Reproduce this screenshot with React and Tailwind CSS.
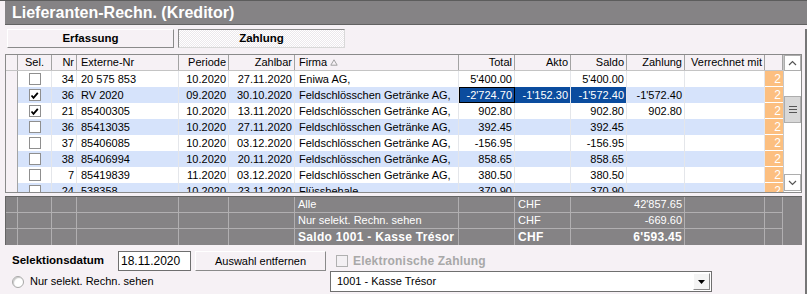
import React from "react";

const F = "Feldschlösschen Getränke AG,";

const cols = [
  { k: "ind", w: "w-[12px]" },
  { k: "sel", w: "w-[34px]", h: "Sel.", a: "c" },
  { k: "nr", w: "w-[25px]", h: "Nr", a: "r" },
  { k: "ext", w: "w-[102px]", h: "Externe-Nr", a: "l" },
  { k: "per", w: "w-[50px]", h: "Periode", a: "r" },
  { k: "zb", w: "w-[66px]", h: "Zahlbar", a: "r" },
  { k: "firma", w: "w-[164px]", h: "Firma", a: "l" },
  { k: "total", w: "w-[56px]", h: "Total", a: "r" },
  { k: "akto", w: "w-[56px]", h: "Akto", a: "r" },
  { k: "saldo", w: "w-[56px]", h: "Saldo", a: "r" },
  { k: "zahl", w: "w-[58px]", h: "Zahlung", a: "r" },
  { k: "verr", w: "w-[80px]", h: "Verrechnet mit", a: "r" },
  { k: "or", w: "w-[18px]", a: "r" },
];

const align = {
  c: "justify-center",
  r: "justify-end pr-[2px]",
  l: "justify-start pl-[4px]",
};

const rows = [
  { nr: "34", ext: "20 575 853", per: "10.2020", zb: "27.11.2020", firma: "Eniwa AG,", total: "5'400.00", saldo: "5'400.00" },
  { sel: true, active: true, nr: "36", ext: "RV 2020", per: "09.2020", zb: "30.10.2020", firma: F, total: "-2'724.70", akto: "-1'152.30", saldo: "-1'572.40", zahl: "-1'572.40" },
  { sel: true, nr: "21", ext: "85400305", per: "10.2020", zb: "13.11.2020", firma: F, total: "902.80", saldo: "902.80", zahl: "902.80" },
  { nr: "36", ext: "85413035", per: "10.2020", zb: "27.11.2020", firma: F, total: "392.45", saldo: "392.45" },
  { nr: "37", ext: "85406085", per: "10.2020", zb: "03.12.2020", firma: F, total: "-156.95", saldo: "-156.95" },
  { nr: "38", ext: "85406994", per: "10.2020", zb: "20.11.2020", firma: F, total: "858.65", saldo: "858.65" },
  { nr: "7", ext: "85419839", per: "11.2020", zb: "03.12.2020", firma: F, total: "380.50", saldo: "380.50" },
  { nr: "24", ext: "538358", per: "10.2020", zb: "23.11.2020", firma: "Flüssbehale", total: "370.90", saldo: "370.90" },
];

function Check({ on }) {
  return (
    <span className="w-[12px] h-[12px] border border-[#8f8f8f] bg-white flex items-center justify-center">
      {on && (
        <svg width="9" height="9" viewBox="0 0 9 9">
          <path d="M1.5 4.5 L3.5 6.8 L7.8 1.8" stroke="#000" strokeWidth="1.8" fill="none" />
        </svg>
      )}
    </span>
  );
}

function HeaderRow() {
  return (
    <div className="flex h-[16px] border-b border-[#c4c4c4] bg-[#f6f1f5]">
      {cols.map((c) => (
        <div
          key={c.k}
          className={`${c.w} shrink-0 h-full flex items-center border-r border-[#a3a3a3] whitespace-nowrap ${c.a ? align[c.a] : ""}`}
        >
          {c.h}
          {c.k === "firma" && (
            <svg className="ml-[3px]" width="8" height="7" viewBox="0 0 8 7">
              <path d="M4 0.8 L7.2 6.2 L0.8 6.2 Z" stroke="#a0a0a0" strokeWidth="1" fill="none" />
            </svg>
          )}
        </div>
      ))}
    </div>
  );
}

function DataRow({ r, i }) {
  const bg = i % 2 === 1 ? "bg-[#d6e3fb]" : "bg-white";
  return (
    <div className="flex h-[16px] shrink-0">
      {cols.map((c) => {
        if (c.k === "ind")
          return <div key={c.k} className={`${c.w} shrink-0 h-full bg-[#f6f1f5] border-r border-[#a3a3a3]`} />;
        if (c.k === "or")
          return (
            <div key={c.k} className={`${c.w} shrink-0 h-full bg-[#fcbf80] border-b border-white text-white flex items-center justify-end pr-[2px] text-[12px]`}>
              2
            </div>
          );
        let cellBg = bg;
        let extra = "text-black";
        if (r.active && (c.k === "total" || c.k === "akto" || c.k === "saldo")) {
          cellBg = "bg-[#0b4c9e]";
          extra = "text-white";
        }
        if (r.active && c.k === "total") extra += " outline outline-1 outline-black -outline-offset-1";
        return (
          <div
            key={c.k}
            className={`${c.w} shrink-0 h-full flex items-center border-r border-[#e4e6ea] whitespace-nowrap overflow-hidden ${cellBg} ${extra} ${align[c.a]}`}
          >
            {c.k === "sel" ? <Check on={r.sel} /> : r[c.k]}
          </div>
        );
      })}
    </div>
  );
}

function ScrollBar() {
  return (
    <div className="w-[18px] shrink-0 h-full flex flex-col bg-white border-l border-[#c8c8c8]">
      <div className="h-[16px] border border-[#adadad] bg-white flex items-center justify-center">
        <svg width="9" height="6" viewBox="0 0 9 6">
          <path d="M1 5 L4.5 1.5 L8 5" stroke="#555" strokeWidth="1.2" fill="none" />
        </svg>
      </div>
      <div className="h-[25px]" />
      <div className="h-[27px] border border-[#adadad] bg-[#d8d8d8] flex flex-col items-center justify-center gap-[2px]">
        <span className="w-[8px] h-[1px] bg-[#555]" />
        <span className="w-[8px] h-[1px] bg-[#555]" />
        <span className="w-[8px] h-[1px] bg-[#555]" />
      </div>
      <div className="flex-1" />
      <div className="h-[17px] border border-[#adadad] bg-white flex items-center justify-center mb-[1px]">
        <svg width="9" height="6" viewBox="0 0 9 6">
          <path d="M1 1 L4.5 4.5 L8 1" stroke="#555" strokeWidth="1.2" fill="none" />
        </svg>
      </div>
    </div>
  );
}

function SumRow({ label, value, bold, last }) {
  const line = "border-r border-[#b1afb1]";
  const b = last ? "" : "border-b border-[#b1afb1]";
  const fw = bold ? "font-bold text-[12px] tracking-[0.3px]" : "";
  return (
    <div className={`flex h-[16px] ${fw}`}>
      <div className={`w-[12px] shrink-0 ${line} ${b}`} />
      <div className={`w-[34px] shrink-0 ${line} ${b}`} />
      <div className={`w-[25px] shrink-0 ${line} ${b}`} />
      <div className={`w-[102px] shrink-0 ${line} ${b}`} />
      <div className={`w-[50px] shrink-0 ${line} ${b}`} />
      <div className={`w-[66px] shrink-0 ${line} ${b}`} />
      <div className={`w-[164px] shrink-0 flex items-center pl-[3px] whitespace-nowrap ${line} ${b}`}>{label}</div>
      <div className={`w-[56px] shrink-0 ${line} ${b}`} />
      <div className={`w-[56px] shrink-0 flex items-center pl-[3px] ${line} ${b}`}>CHF</div>
      <div className={`w-[114px] shrink-0 flex items-center justify-end pr-[2px] ${line} ${b}`}>{value}</div>
      <div className={`w-[80px] shrink-0 ${line} ${b}`} />
      <div className={`w-[18px] shrink-0 ${line} ${b}`} />
      <div className="flex-1" />
    </div>
  );
}

export default function App() {
  return (
    <div className="w-[807px] h-[294px] overflow-hidden bg-[#f6f1f5] text-[11px] text-black font-['Liberation_Sans','Arial',sans-serif]">
      {/* title */}
      <div className="h-[25px] border-t border-[#5c5c5c] flex">
        <div className="w-[5px] bg-[#f6f1f5]" />
        <div className="flex-1 bg-[#858385] border-b border-[#626262] flex items-center pl-[7px] text-white font-bold text-[16px]">
          Lieferanten-Rechn. (Kreditor)
        </div>
      </div>

      <div className="mt-[4px] border-r-2 border-[#767676] h-[265px]">
        {/* tabs */}
        <div className="flex h-[19px] pl-[7px] gap-[4px] font-bold text-[11.5px]">
          <div className="w-[167px] h-full flex items-center justify-center border border-t-white border-l-white border-b-[#8a8a8a] border-r-[#8a8a8a] bg-[#f6f1f5]">
            Erfassung
          </div>
          <div className="w-[167px] h-full flex items-center justify-center border border-t-[#8a8a8a] border-l-[#8a8a8a] border-b-[#d8d8d8] border-r-[#d8d8d8] bg-[repeating-conic-gradient(#ffffff_0_25%,#ece8ec_0_50%)] bg-[length:2px_2px]">
            Zahlung
          </div>
        </div>

        {/* grid */}
        <div className="ml-[5px] mt-[6px] w-[797px] h-[139px] border border-[#8a8a8a] flex overflow-hidden bg-white">
          <div className="w-[777px] shrink-0 flex flex-col overflow-hidden">
            <HeaderRow />
            {rows.map((r, i) => (
              <DataRow key={i} r={r} i={i} />
            ))}
          </div>
          <ScrollBar />
        </div>

        {/* summary */}
        <div className="ml-[5px] mt-[3px] w-[797px] bg-[#858385] border-t border-l border-[#656565] text-white">
          <SumRow label="Alle" value="42'857.65" />
          <SumRow label="Nur selekt. Rechn. sehen" value="-669.60" />
          <SumRow label="Saldo 1001 - Kasse Trésor" value="6'593.45" bold last />
        </div>

        {/* bottom controls */}
        <div className="mt-[6px] flex items-center h-[20px] pl-[12px]">
          <div className="w-[106px] font-bold text-[11.5px]">Selektionsdatum</div>
          <div className="w-[73px] h-[20px] border border-[#6f6f6f] bg-white flex items-center pl-[2px] text-[12px]">
            18.11.2020
          </div>
          <div className="ml-[4px] w-[131px] h-[20px] flex items-center justify-center border border-t-white border-l-white border-b-[#8a8a8a] border-r-[#8a8a8a] bg-[#f6f1f5]">
            Auswahl entfernen
          </div>
          <span className="ml-[10px] w-[12px] h-[12px] border border-[#b0b0b0] bg-[#f3f0f3]" />
          <span className="ml-[5px] font-bold text-[12px] text-[#a8a8a8] tracking-[0.2px]">Elektronische Zahlung</span>
        </div>
        <div className="flex items-center h-[21px] pl-[12px]">
          <span className="w-[12px] h-[12px] rounded-full border border-[#a8a8a8] bg-white shadow-[inset_1px_1px_1px_#c8c8c8]" />
          <span className="ml-[6px] w-[300px]">Nur selekt. Rechn. sehen</span>
          <div className="w-[382px] h-[21px] border border-[#6f6f6f] bg-white flex items-center pl-[6px] pr-[1px]">
            <span className="flex-1">1001 - Kasse Trésor</span>
            <span className="w-[17px] h-[17px] flex items-center justify-center border border-t-white border-l-white border-b-[#8a8a8a] border-r-[#8a8a8a] bg-[#f4f4f4]">
              <svg width="7" height="4" viewBox="0 0 7 4">
                <path d="M0 0 L7 0 L3.5 4 Z" fill="#000" />
              </svg>
            </span>
          </div>
        </div>
      </div>
    </div>
  );
}
